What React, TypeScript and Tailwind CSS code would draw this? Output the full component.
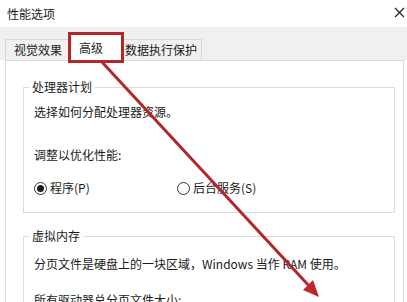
import React from "react";

const font = { fontFamily: '"Noto Sans CJK SC", "Noto Sans", sans-serif' };

function Radio({ checked, label }: { checked?: boolean; label: string }) {
  return (
    <div className="flex items-center gap-[3px]">
      <span className="w-[13px] h-[13px] rounded-full border border-[#333] flex items-center justify-center bg-white">
        {checked && <span className="w-[7px] h-[7px] rounded-full bg-[#1a1a1a]" />}
      </span>
      <span>{label}</span>
    </div>
  );
}

export default function App() {
  return (
    <div
      className="relative w-[407px] h-[302px] overflow-hidden bg-white text-[12px] leading-[16px] text-[#1a1a1a]"
      style={font}
    >
      <div className="h-[27px] flex items-center justify-between pl-[7px] pr-[2px]">
        <span className="text-[12px]">性能选项</span>
        <svg width="11" height="11" viewBox="0 0 11 11" className="mb-[2px]">
          <path d="M1 1 L10 10 M10 1 L1 10" stroke="#222" strokeWidth="1.2" />
        </svg>
      </div>
      <div className="h-[33px] bg-[#f0f0f0] flex items-end pl-[5px]">
        <div className="h-[21px] px-[8px] flex items-center border border-b-0 border-[#d9d9d9] bg-[#f0f0f0]">
          视觉效果
        </div>
        <div className="h-[25px] w-[50px] pl-[8px] flex items-center bg-white outline-[3px] outline-solid outline-[#b3272c] relative z-10">
          高级
        </div>
        <div className="h-[21px] px-[4px] flex items-center border border-b-0 border-l-0 border-[#d9d9d9] bg-[#f0f0f0]">
          数据执行保护
        </div>
      </div>
      <div className="ml-[5px] mr-[3px] border-l border-t border-r border-[#d9d9d9] h-[260px] pl-[17px] pr-[8px]">
        <fieldset className="mt-[18px] border border-[#dcdcdc] px-0 pb-[16px]">
          <legend className="ml-[5px] px-[3px]">处理器计划</legend>
          <div className="pl-[10px]">
            <div className="mt-[9px]">选择如何分配处理器资源。</div>
            <div className="mt-[27px]">调整以优化性能:</div>
            <div className="mt-[17px] flex items-center">
              <div className="w-[143px]">
                <Radio checked label="程序(P)" />
              </div>
              <Radio label="后台服务(S)" />
            </div>
          </div>
        </fieldset>
        <fieldset className="mt-[15px] border border-[#dcdcdc] px-0 pb-[16px]">
          <legend className="ml-[5px] px-[3px]">虚拟内存</legend>
          <div className="pl-[10px]">
            <div className="mt-[12px]">分页文件是硬盘上的一块区域，Windows 当作 RAM 使用。</div>
            <div className="mt-[20px]">所有驱动器总分页文件大小:</div>
          </div>
        </fieldset>
      </div>
      <svg className="absolute inset-0 pointer-events-none z-20" width="407" height="302">
        <line x1="101" y1="61" x2="311" y2="288" stroke="#b3272c" strokeWidth="3" />
        <polygon points="319,297 303,290 313,280" fill="#c0262b" />
      </svg>
    </div>
  );
}
